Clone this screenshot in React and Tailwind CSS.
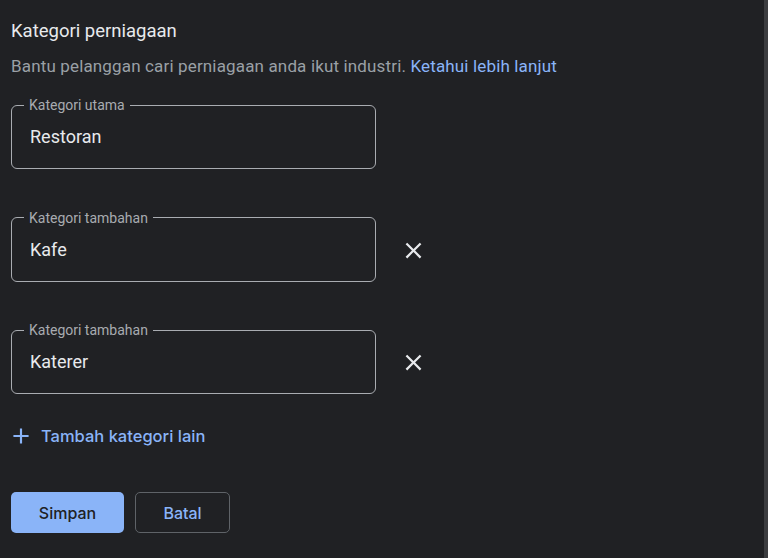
import React from "react";

function CloseIcon() {
    return (
        <svg width="27" height="27" viewBox="0 0 24 24" fill="#e8eaed">
            <path d="M19 6.41 17.59 5 12 10.59 6.41 5 5 6.41 10.59 12 5 17.59 6.41 19 12 13.41 17.59 19 19 17.59 13.41 12z" />
        </svg>
    );
}

function CategoryField({ label, value, removable }) {
    return (
        <div className="flex items-start">
            <fieldset className="w-[365px] m-0 p-0 border border-[#a9acb1] rounded-[6px]">
                <legend className="ml-[12px] px-[5px] text-[14px] leading-[16px] text-[#a8abb0]">{label}</legend>
                <div className="pl-[18px] pt-[12px] pb-[19px] text-[18px] leading-[24px] text-[#e8eaed]">{value}</div>
            </fieldset>
            {removable && (
                <button type="button" className="ml-[24px] mt-[27px] w-[27px] h-[27px] flex items-center justify-center">
                    <CloseIcon />
                </button>
            )}
        </div>
    );
}

export default function App() {
    return (
        <div className="w-[768px] h-[558px] bg-[#202124] flex overflow-hidden" style={{ fontFamily: "Roboto, 'Noto Sans', sans-serif" }}>
            <div className="flex-1 pl-[11px] pt-[19px]">
                <div className="text-[18.5px] leading-[24px] text-[#e8eaed]">Kategori perniagaan</div>
                <div className="mt-[11px] text-[17px] tracking-[0.15px] leading-[24px] text-[#9aa0a6]">
                    Bantu pelanggan cari perniagaan anda ikut industri.{" "}
                    <a href="#" className="text-[#8ab4f8]">Ketahui lebih lanjut</a>
                </div>

                <div className="mt-[19px] flex flex-col gap-[40.5px]">
                    <CategoryField label="Kategori utama" value="Restoran" />
                    <CategoryField label="Kategori tambahan" value="Kafe" removable />
                    <CategoryField label="Kategori tambahan" value="Katerer" removable />
                </div>

                {/* Add another category */}
                <button
                    type="button"
                    className="mt-[29px] flex items-center text-[#8ab4f8] text-[16.5px] font-medium leading-[24px]"
                    style={{ fontFamily: "Inter, Roboto, sans-serif" }}
                >
                    <svg width="26" height="26" viewBox="0 0 24 24" fill="#8ab4f8" className="-ml-[3px]">
                        <path d="M19 13h-6v6h-2v-6H5v-2h6V5h2v6h6v2z" />
                    </svg>
                    <span className="ml-[7px]">Tambah kategori lain</span>
                </button>

                <div className="mt-[43px] flex gap-[11px]" style={{ fontFamily: "Inter, Roboto, sans-serif" }}>
                    <button type="button" className="w-[113px] h-[41px] rounded-[5px] bg-[#8ab4f8] text-[#202124] text-[16px] font-medium">
                        Simpan
                    </button>
                    <button type="button" className="w-[95px] h-[41px] rounded-[5px] border border-[#5f6368] text-[#8ab4f8] text-[16px] font-medium">
                        Batal
                    </button>
                </div>
            </div>
            <div className="w-[4px] h-full bg-[#3c3d40]" />
        </div>
    );
}
